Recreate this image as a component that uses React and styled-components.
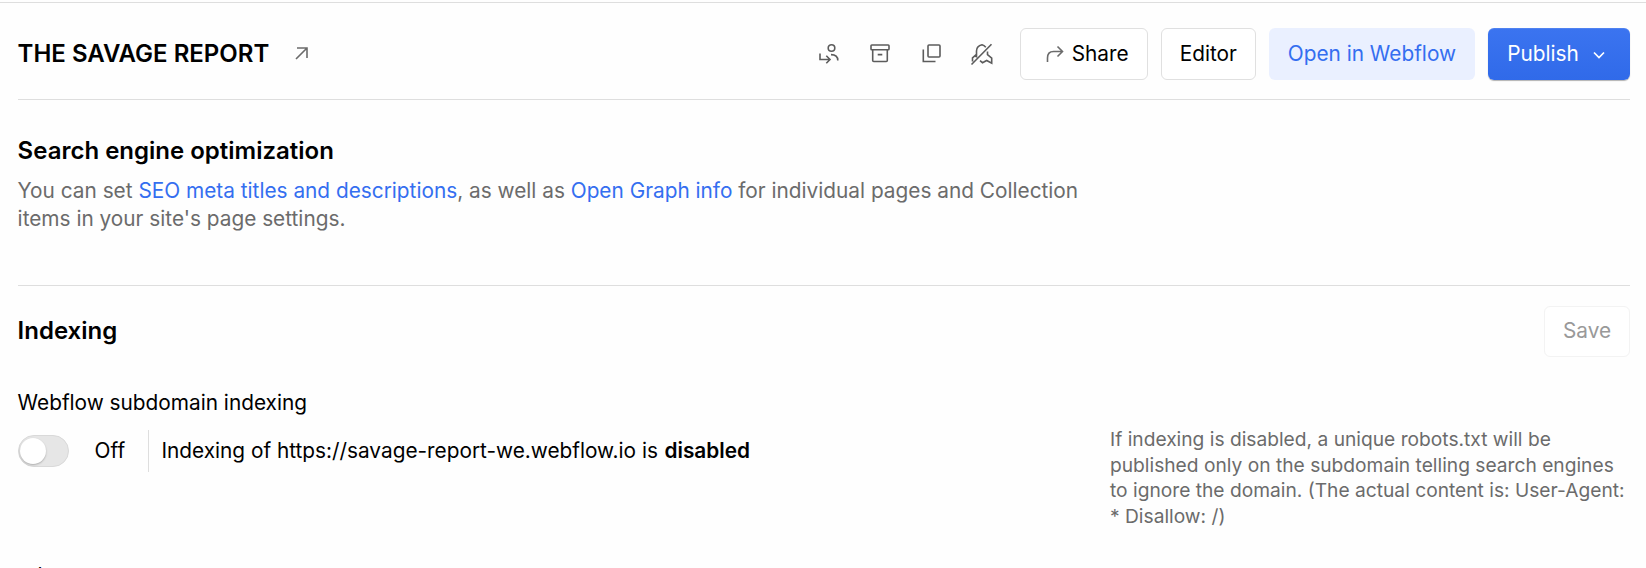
import React from "react";
import styled, { createGlobalStyle, css } from "styled-components";

const GlobalStyle = createGlobalStyle`
  * { box-sizing: border-box; }
  html, body { margin: 0; height: 568px; overflow: hidden; background: #fefefe; }
  body { font-family: Inter, "Liberation Sans", sans-serif; font-size: 20.8px; color: #000; -webkit-font-smoothing: antialiased; }
  #root { height: 568px; overflow: hidden; }
`;

const Page = styled.main`
  margin-top: 2px;
  border-top: 1px solid #dedede;
  padding: 0 16px 0 17.6px;
`;

const Header = styled.header`
  display: flex;
  align-items: center;
  height: 97px;
  padding-top: 6px;
  border-bottom: 1px solid #dedede;
`;

const SiteTitle = styled.h1`
  margin: 0;
  font-size: 24px;
  font-weight: 600;
  line-height: 32px;
  white-space: nowrap;
`;

const ExternalLink = styled.a`
  display: flex;
  margin-left: 23px;
  margin-top: -2px;
  color: #6b6b6b;
`;

const IconBar = styled.nav`
  display: flex;
  align-items: center;
  gap: 27.2px;
  margin-left: auto;
  margin-right: 26px;
  color: #5c5c5c;
`;

const IconButton = styled.button`
  display: flex;
  padding: 0;
  border: 0;
  background: none;
  color: inherit;
`;

const Actions = styled.div`
  display: flex;
  gap: 12.8px;
`;

const variants = {
  outline: css`border: 1px solid #e0e0e0; background: #fff; color: #000;`,
  soft: css`background: #eaf0ff; color: #346ef0;`,
  primary: css`
    background: linear-gradient(#3b74f0, #306ae9);
    color: #fff;
    box-shadow: 0 1px 1px rgba(0, 0, 0, 0.3), inset 0 1px 0 rgba(255, 255, 255, 0.1);
  `,
  disabled: css`border: 1px solid #f3f3f3; background: #fff; color: #999;`,
};

const Button = styled.button`
  display: flex;
  align-items: center;
  justify-content: center;
  width: ${(p) => p.$width}px;
  height: ${(p) => p.$height || 52}px;
  padding: 0 0 ${(p) => p.$lift || 0}px;
  border: 0;
  border-radius: 6px;
  font: 400 20.8px/28px Inter, sans-serif;
  white-space: nowrap;
  ${(p) => variants[p.$variant]}
`;

const Glyph = styled.span`
  display: flex;
  color: ${(p) => p.$color || "inherit"};
  margin: ${(p) => p.$margin};
`;

const Intro = styled.section`
  height: 186px;
  padding-top: 35px;
  border-bottom: 1px solid #dedede;
`;

const SectionTitle = styled.h2`
  margin: 0;
  padding-bottom: ${(p) => p.$lift || 0}px;
  font-size: 24px;
  font-weight: 600;
  line-height: 32px;
  white-space: nowrap;
`;

const IntroText = styled.p`
  width: 1080px;
  margin: 10px 0 0;
  line-height: 28px;
  color: #6b6b6b;
`;

const TextLink = styled.a`
  color: #346ef0;
`;

const IndexingHeader = styled.div`
  display: flex;
  align-items: center;
  justify-content: space-between;
  padding-top: 20px;
`;

const FieldLabel = styled.h3`
  margin: 32px 0 0;
  font-size: 20.8px;
  font-weight: 400;
  line-height: 28px;
`;

const FieldRow = styled.div`
  display: flex;
  justify-content: space-between;
  height: 145px;
  padding-top: 13px;
`;

const ToggleGroup = styled.div`
  display: flex;
  align-items: center;
  height: 42px;
`;

const Toggle = styled.span`
  width: 51px;
  height: 32px;
  padding: 2px 1px;
  border: 1px solid #d9d9d9;
  border-radius: 16px;
  background: #e6e6e6;
`;

const Knob = styled.span`
  display: block;
  width: 26px;
  height: 26px;
  border-radius: 50%;
  background: #fff;
  box-shadow: 0 1px 2px rgba(0, 0, 0, 0.25);
`;

const ToggleState = styled.span`
  width: 53.4px;
  margin-left: 26px;
  padding-bottom: 2px;
`;

const Status = styled.span`
  display: flex;
  align-items: center;
  height: 42px;
  padding: 0 0 2px 12.4px;
  border-left: 1px solid #dedede;
  white-space: pre;
`;

const Strong = styled.strong`
  margin-left: 0.7px;
  font-weight: 600;
`;

const Help = styled.p`
  width: 520px;
  margin: -3px 0 0;
  font-size: 19.2px;
  line-height: 25.6px;
  color: #6b6b6b;
  white-space: nowrap;
`;

const NextLabel = styled(FieldLabel)`
  margin: 0;
`;

const Icon = ({ size = 24, width = 1.6, children }) => (
  <svg width={size} height={size} viewBox={`0 0 ${size} ${size}`} fill="none" stroke="currentColor" strokeWidth={width}>
    {children}
  </svg>
);

export default function App() {
  return (
    <>
      <GlobalStyle />
      <Page>
        <Header>
          <SiteTitle>THE SAVAGE REPORT</SiteTitle>
          <ExternalLink>
            <Icon size={18}><path d="M4 15 14.5 4.5M5 4h10v10" /></Icon>
          </ExternalLink>
          <IconBar>
            <IconButton aria-label="Transfer site">
              <Icon><circle cx="14.5" cy="6" r="3.3" /><path d="M3 11.5v6h10M9.3 13.8l3.700 3.700-3.700 3.700M14 12.600c4.500 0 6.800 2 6.800 5.900" /></Icon>
            </IconButton>
            <IconButton aria-label="Archive site">
              <Icon><rect x="3" y="3" width="18" height="4.8" rx="0.8" /><path d="M4.700 7.800V18.500q0 1 1 1h12.600q1 0 1-1V7.800M9.700 12.600h4.600" /></Icon>
            </IconButton>
            <IconButton aria-label="Duplicate site">
              <Icon><rect x="9" y="3" width="12" height="12" rx="1" /><path d="M4.300 7.500v12H16.500" /></Icon>
            </IconButton>
            <IconButton aria-label="Unpublish site">
              <Icon><path d="M1.500 22.500 21.500 2.300M6.500 15.500V9C6.500 6 9 3.500 12 2.800c1.500.4 2.800 1.300 3.800 2.400M17.500 9.500v3.200l4.200 3.500v5l-5-2.700-4.200 2.200-2.500-2M6.500 12.300l-4 3.500V19.500" /></Icon>
            </IconButton>
          </IconBar>
          <Actions>
            <Button $variant="outline" $width={127.8}>
              <Glyph $color="#6b6b6b" $margin="0 7px 0 5px">
                <Icon size={20}><path d="M2.500 18v-4Q2.500 7.500 8.500 7.500H17.500M12.500 2.500l5 5-5 5" /></Icon>
              </Glyph>
              Share
            </Button>
            <Button $variant="outline" $width={95}>Editor</Button>
            <Button $variant="soft" $width={206.6}>Open in Webflow</Button>
            <Button $variant="primary" $width={142}>
              Publish
              <Glyph $margin="1px 4px 0 12px">
                <Icon size={16} width={1.7}><path d="m3 5.500 5 5 5-5" /></Icon>
              </Glyph>
            </Button>
          </Actions>
        </Header>
        <Intro>
          <SectionTitle>Search engine optimization</SectionTitle>
          <IntroText>
            You can set <TextLink>SEO meta titles and descriptions</TextLink>, as well as{" "}
            <TextLink>Open Graph info</TextLink> for individual pages and Collection
            <br />
            items in your site's page settings.
          </IntroText>
        </Intro>
        <IndexingHeader>
          <SectionTitle $lift={2}>Indexing</SectionTitle>
          <Button $variant="disabled" $width={86} $height={51} $lift={1}>Save</Button>
        </IndexingHeader>
        <FieldLabel>Webflow subdomain indexing</FieldLabel>
        <FieldRow>
          <ToggleGroup>
            <Toggle><Knob /></Toggle>
            <ToggleState>Off</ToggleState>
            <Status>
              Indexing of https://savage-report-we.webflow.io is <Strong>disabled</Strong>
            </Status>
          </ToggleGroup>
          <Help>
            If indexing is disabled, a unique robots.txt will be<br />
            published only on the subdomain telling search engines<br />
            to ignore the domain. (The actual content is: User-Agent:<br />
            * Disallow: /)
          </Help>
        </FieldRow>
        <NextLabel>robots.txt</NextLabel>
      </Page>
    </>
  );
}
